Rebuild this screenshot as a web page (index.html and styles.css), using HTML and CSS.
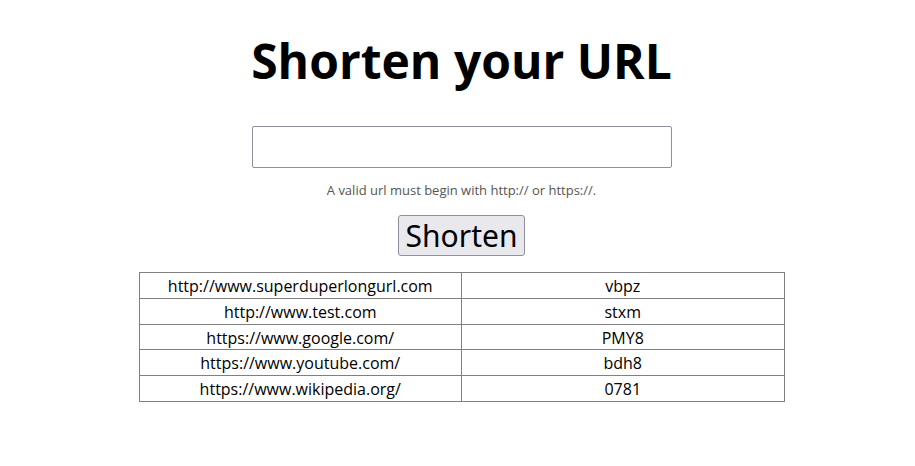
FILE: index.html
```html
<!DOCTYPE html>
<html>
<head>
<meta charset="utf-8">
<link rel="stylesheet" href="styles.css">
</head>
<body>
<main class="page">
  <h1 class="title">Shorten your URL</h1>
  <form class="form">
    <input class="url-input" type="text">
    <p class="hint">A valid url must begin with http:// or https://.</p>
    <button class="btn" type="button">Shorten</button>
  </form>
  <table class="links">
    <tr><td>http://www.superduperlongurl.com</td><td>vbpz</td></tr>
    <tr><td>http://www.test.com</td><td>stxm</td></tr>
    <tr><td>https://www.google.com/</td><td>PMY8</td></tr>
    <tr><td>https://www.youtube.com/</td><td>bdh8</td></tr>
    <tr><td>https://www.wikipedia.org/</td><td>0781</td></tr>
  </table>
</main>
</body>
</html>
```
FILE: styles.css
```css
body {
  margin: 0;
  background: #fff;
  font-family: "Open Sans", "Noto Sans", sans-serif;
  color: #000;
}
.page {
  display: flex;
  flex-direction: column;
  align-items: center;
  padding-top: 28px;
  padding-left: 8px;
}
.title {
  margin: 0;
  font-size: 48px;
  font-weight: 700;
  line-height: 66px;
}
.form {
  display: flex;
  flex-direction: column;
  align-items: center;
  margin-top: 32px;
}
.url-input {
  width: 420px;
  height: 42px;
  box-sizing: border-box;
  border: 1px solid #8f8f9d;
  border-radius: 2px;
  margin: 0;
}
.hint {
  margin: 13px 0 0;
  font-size: 13px;
  color: #555;
  line-height: 18px;
}
.btn {
  margin-top: 16px;
  font-family: "Noto Sans", sans-serif;
  font-size: 30px;
  padding: 0 7px;
  height: 41px;
  line-height: 38px;
  background: #e9e9ed;
  border: 1px solid #8f8f9d;
  border-radius: 3px;
  color: #000;
}
.links {
  margin-top: 16px;
  width: 646px;
  border-collapse: collapse;
  border: 1px solid #808080;
  font-size: 16px;
}
.links td {
  width: 50%;
  border: 1px solid #808080;
  text-align: center;
  padding: 3px 2px 1px;
  line-height: 20.8px;
}
```
